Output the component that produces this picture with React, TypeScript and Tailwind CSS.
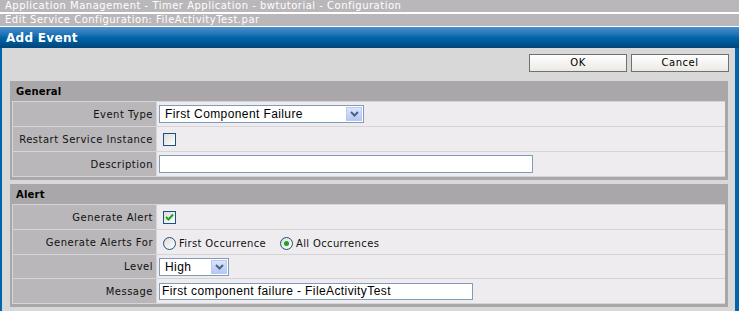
import React from 'react'

const label = "font-['DejaVu_Sans',sans-serif] text-[10px] tracking-[0.5px] text-[#111]"
const ctrl = "font-['Liberation_Sans',Arial,sans-serif] text-[12px] tracking-[0.4px] text-black"

function DropButton() {
  return (
    <span className="flex h-full w-[16px] items-center justify-center border border-[#b9c9ef] bg-gradient-to-b from-[#dbe5fb] to-[#b5c8f3]">
      <svg width="9" height="6" viewBox="0 0 9 6">
        <path d="M1 1 L4.5 4.5 L8 1" fill="none" stroke="#4d6185" strokeWidth="2" />
      </svg>
    </span>
  )
}

function Select({ value, width }: { value: string; width: string }) {
  return (
    <div className={`flex h-[18px] items-center border border-[#7f9db9] bg-white p-[1px] ${width}`}>
      <span className={`flex-1 pl-[4px] leading-[14px] ${ctrl}`}>{value}</span>
      <DropButton />
    </div>
  )
}

function Checkbox({ checked }: { checked?: boolean }) {
  return (
    <span className="flex h-[13px] w-[13px] items-center justify-center border border-[#1c5180] bg-gradient-to-br from-[#dcdcd7] to-white">
      {checked && (
        <svg width="9" height="8" viewBox="0 0 9 8">
          <path d="M1 4 L3.5 6.5 L8 1.5" fill="none" stroke="#21a121" strokeWidth="2" />
        </svg>
      )}
    </span>
  )
}

function Radio({ checked }: { checked?: boolean }) {
  return (
    <span className="flex h-[13px] w-[13px] items-center justify-center rounded-full border border-[#1c5180] bg-gradient-to-br from-[#dcdcd7] to-white">
      {checked && <span className="h-[5px] w-[5px] rounded-full bg-[#21a121]" />}
    </span>
  )
}

function Row({ name, children, h = 'h-[24px]' }: { name: string; children?: React.ReactNode; h?: string }) {
  return (
    <div className={`grid grid-cols-[143px_1fr] gap-[1px] ${h}`}>
      <div className={`flex items-center justify-end bg-[#b9b7b9] pr-[3px] ${label}`}>{name}</div>
      <div className="flex items-center gap-[4px] bg-[#efecef] pl-[2px]">{children}</div>
    </div>
  )
}

function Panel({ title, children }: { title: string; children: React.ReactNode }) {
  return (
    <div className="ml-[8px] mr-[7px] bg-[#a9a7a9] px-[2px] pb-[3px] pr-[3px]">
      <div className="flex h-[20px] items-center pl-[4px] font-['DejaVu_Sans',sans-serif] text-[10px] font-bold tracking-[0.2px] text-black">
        {title}
      </div>
      <div className="flex flex-col gap-[1px] bg-[#d6d4d6] p-[1px] pr-0">{children}</div>
    </div>
  )
}

export default function App() {
  return (
    <div className="flex h-[311px] w-[739px] flex-col overflow-hidden bg-white font-['DejaVu_Sans',sans-serif]">
      <div className="h-[12px] bg-[#bab7ba] pl-[5px] text-[10px] leading-[12px] tracking-[0.5px] text-white">
        Application Management - Timer Application - bwtutorial - Configuration
      </div>
      <div className="mt-[2px] h-[12px] bg-[#bab7ba] pl-[5px] text-[10px] leading-[12px] tracking-[0.5px] text-white">
        Edit Service Configuration: FileActivityTest.par
      </div>
      <div className="mt-[1px] flex flex-1 flex-col bg-[#0066ab] pl-[2px] pr-[4px]">
        <div className="-ml-[2px] -mr-[4px] flex h-[21px] items-center bg-gradient-to-b from-[#4a8fcc] via-[#0066ab] to-[#00457a] pl-[6px] text-[12px] font-bold tracking-[0.3px] text-white">
          Add Event
        </div>
        <div className="flex-1 bg-[#d8d8d8]">
          <div className="flex justify-end gap-[4px] pr-[6px] pt-[6px]">
            {['OK', 'Cancel'].map((b) => (
              <button
                key={b}
                className="h-[18px] w-[98px] border border-[#707070] bg-gradient-to-b from-white to-[#ece9e4] text-[10px] leading-[16px] tracking-[0.5px] text-black"
              >
                {b}
              </button>
            ))}
          </div>
          <div className="mt-[9px]">
            <Panel title="General">
              <Row name="Event Type">
                <Select value="First Component Failure" width="w-[205px]" />
              </Row>
              <Row name="Restart Service Instance">
                <span className="pl-[4px]">
                  <Checkbox />
                </span>
              </Row>
              <Row name="Description">
                <div className="h-[18px] w-[374px] border border-[#7f9db9] bg-white" />
              </Row>
            </Panel>
          </div>
          <div className="mt-[4px]">
            <Panel title="Alert">
              <Row name="Generate Alert">
                <span className="pl-[4px]">
                  <Checkbox checked />
                </span>
              </Row>
              <Row name="Generate Alerts For">
                <label className={`flex items-center gap-[3px] pl-[4px] pt-[2px] ${label} tracking-[0.35px]`}>
                  <Radio /> First Occurrence
                </label>
                <label className={`ml-[10px] flex items-center gap-[3px] pt-[2px] ${label} tracking-[0.35px]`}>
                  <Radio checked /> All Occurrences
                </label>
              </Row>
              <Row name="Level" h="h-[23px]">
                <Select value="High" width="w-[70px]" />
              </Row>
              <Row name="Message">
                <div className={`flex h-[17px] w-[314px] items-center border border-[#7f9db9] bg-white pl-[2px] ${ctrl}`}>
                  First component failure - FileActivityTest
                </div>
              </Row>
            </Panel>
          </div>
          <div className="ml-[8px] mr-[7px] mt-[6px] h-[20px] bg-[#a9a7a9]" />
        </div>
      </div>
    </div>
  )
}
